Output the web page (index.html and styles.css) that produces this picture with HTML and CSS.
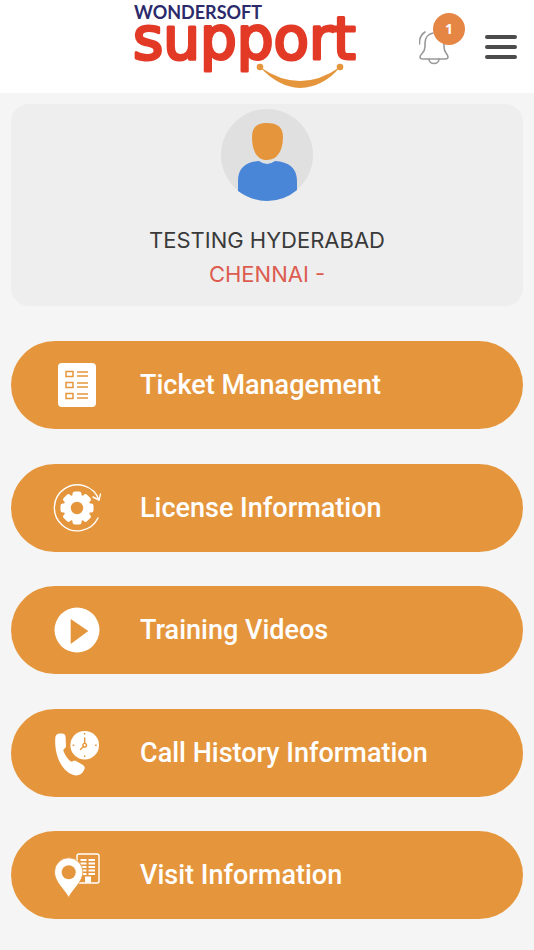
FILE: index.html
```html
<!DOCTYPE html>
<html lang="en">
<head>
	<meta charset="utf-8">
	<meta name="viewport" content="width=device-width, initial-scale=1">
	<title>Wondersoft Support</title>
	<link rel="stylesheet" href="styles.css">
</head>
<body>
	<header class="topbar">
		<a href="#" class="logo" aria-label="Wondersoft Support">
			<svg width="226" height="92" viewBox="0 0 226 92">
				<text class="logo-company" x="1" y="18">WONDERSOFT</text>
				<text class="logo-product" x="0" y="58">support</text>
				<g fill="#e5963c">
					<path d="M127 66 Q167 94 207 66 Q191 86 167 87 Q145 86 127 66z" />
					<circle cx="127" cy="66" r="3.3" />
					<circle cx="207" cy="66" r="3.3" />
				</g>
			</svg>
		</a>
		<button type="button" class="bell" aria-label="Notifications">
			<svg width="46" height="54" viewBox="0 0 46 54" fill="none" stroke="#999" stroke-width="1.6" stroke-linecap="round" stroke-linejoin="round">
				<path d="M14 20 C9 21 6 25 6 30 V34 C6 40 1 41 1 44 Q1 46 4 46 H26 Q29 46 29 44 C29 41 25 40 25 34 V28" />
				<path d="M10 46 C10 52 20 52 20 46" />
				<path d="M0.500 31 Q0 23 6 19" />
			</svg>
			<span class="badge">1</span>
		</button>
		<button type="button" class="menu-toggle" aria-label="Menu">
			<span></span>
			<span></span>
			<span></span>
		</button>
	</header>

	<main>
		<section class="profile">
			<svg class="avatar" width="92" height="92" viewBox="0 0 92 92">
				<circle cx="46" cy="46" r="46" fill="#e0e0e0" />
				<path d="M46 14 C56 14 62 18 62 28 C62 42 56 51 46 51 C36 51 31 42 31 28 C31 18 36 14 46 14z" fill="#e5963c" />
				<path d="M17 82 V72 C17 59 25 53 38 52 Q46 58 54 52 C68 53 76 59 76 72 V81 Q63 92 46 92 Q31 92 17 82z" fill="#4a86d8" />
			</svg>
			<h1>TESTING HYDERABAD</h1>
			<p>CHENNAI -</p>
		</section>

		<nav class="menu">
			<a href="#tickets">
				<svg width="48" height="48" viewBox="0 0 48 48">
					<rect x="5" y="2" width="38" height="44" rx="4" fill="#fff" />
					<g fill="none" stroke="#e5963c" stroke-width="1.5">
						<path d="M13 10.500h7v5h-7z M13 21.500h7v5h-7z M13 32.500h7v5h-7z" />
						<path d="M24 11h11 M24 15h11 M24 22h11 M24 26h11 M24 33h11 M24 37h11" />
					</g>
				</svg>
				Ticket Management
			</a>
			<a href="#license">
				<svg width="48" height="48" viewBox="0 0 48 48">
					<g fill="none" stroke="#fff" stroke-width="1.4" stroke-linecap="round" stroke-linejoin="round">
						<path d="M45 34 A23 23 0 1 1 46 16" />
						<path d="M40 13 L46 16 L47.500 10" />
					</g>
					<g fill="#fff">
						<circle cx="24" cy="24" r="13.500" />
						<rect x="19.500" y="7.500" width="9" height="33" rx="2.500" />
						<rect x="19.500" y="7.500" width="9" height="33" rx="2.500" transform="rotate(45 24 24)" />
						<rect x="19.500" y="7.500" width="9" height="33" rx="2.500" transform="rotate(90 24 24)" />
						<rect x="19.500" y="7.500" width="9" height="33" rx="2.500" transform="rotate(135 24 24)" />
					</g>
					<circle cx="24" cy="24" r="6.200" fill="#e5963c" />
				</svg>
				License Information
			</a>
			<a href="#training">
				<svg width="48" height="48" viewBox="0 0 48 48">
					<circle cx="24" cy="24" r="22.500" fill="#fff" />
					<path d="M17.700 13 V38 L35.300 25z" fill="#e5963c" />
				</svg>
				Training Videos
			</a>
			<a href="#calls">
				<svg width="48" height="48" viewBox="0 0 48 48">
					<path d="M6 4.500 H9 Q12.500 4.500 12.600 8 L13 17 Q13 19 11 20 Q10 21 10.500 22 Q13 29 18 32.500 Q19 33 20 32 Q21.500 31 23 32 L30 36 Q32.500 38 31.500 40 Q29 46.500 23 46.500 C11 45 1 29 2.300 9 Q2.500 5 6 4.500z" fill="#fff" />
					<circle cx="31.700" cy="16.200" r="14.300" fill="#fff" />
					<g fill="none" stroke="#e5963c" stroke-width="1.400" stroke-linecap="round">
						<circle cx="31.700" cy="16.200" r="1.800" />
						<path d="M31.700 14 V9 M30.300 17.700 L27.500 20.500" />
						<path d="M31.700 4.500v.6 M31.700 27v.6 M20.200 16.200h.6 M42.600 16.200h.6" />
					</g>
				</svg>
				Call History Information
			</a>
			<a href="#visits">
				<svg width="48" height="48" viewBox="0 0 48 48">
					<rect x="24" y="3" width="22" height="29" rx="2" fill="none" stroke="#fff" stroke-width="1.400" />
					<path d="M27.500 9h6 M35.500 9h6.500 M27.500 12.500h6 M35.500 12.500h6.500 M27.500 16h6 M35.500 16h6.500 M27.500 19.500h6 M35.500 19.500h6.500 M27.500 23h6 M35.500 23h6.500" stroke="#fff" stroke-width="1.800" />
					<path d="M32 25.500h6v6h-6z" fill="#fff" />
					<path d="M15.700 46.500 C12 39 1.500 31 1.500 21 A14.200 14.200 0 0 1 29.900 21 C29.900 31 19 39 15.700 46.500z" fill="#fff" stroke="#e5963c" stroke-width=".8" />
					<circle cx="15.700" cy="21.300" r="7" fill="#e5963c" />
				</svg>
				Visit Information
			</a>
		</nav>
	</main>
</body>
</html>
```

FILE: styles.css
```css
* {
	box-sizing: border-box;
}

body {
	display: flex;
	flex-direction: column;
	min-height: 100vh;
	margin: 0;
	background: #f5f5f5;
	color: #3a3a3a;
	font-family: Roboto, sans-serif;
}

button {
	padding: 0;
	border: 0;
	background: none;
	cursor: pointer;
}

svg {
	display: block;
	flex-shrink: 0;
}

.topbar {
	display: flex;
	align-items: center;
	justify-content: flex-end;
	height: 93px;
	padding: 0 17px;
	background: #fff;
}

.logo {
	margin-right: 60px;
}

.logo-company {
	fill: #2b2b6b;
	font: bold 18px Lato, sans-serif;
}

.logo-product {
	fill: #e23a26;
	stroke: #e23a26;
	stroke-width: 3px;
	stroke-linejoin: round;
	font: 58px "DejaVu Sans", sans-serif;
}

.bell {
	position: relative;
	margin-right: 20px;
	padding-bottom: 14px;
}

.badge {
	position: absolute;
	top: 0;
	right: 0;
	width: 32px;
	border-radius: 50%;
	background: #e68645;
	color: #fff;
	font: bold 14px/32px "Open Sans", sans-serif;
}

.menu-toggle {
	display: flex;
	flex-direction: column;
	gap: 6px;
	width: 32px;
}

.menu-toggle span {
	height: 4px;
	border-radius: 2px;
	background: #4c4c4c;
}

main {
	display: flex;
	flex: 1;
	flex-direction: column;
	gap: 35px;
	padding: 11px 11px 31px;
}

.profile {
	display: flex;
	flex-direction: column;
	align-items: center;
	padding: 5px 0 15px;
	border-radius: 18px;
	background: #eee;
	font-family: Inter, sans-serif;
}

.avatar {
	margin-bottom: 22px;
}

.profile h1,
.profile p {
	margin: 0;
	font-size: 22px;
	font-weight: 400;
	line-height: 34px;
}

.profile p {
	color: #dc5c50;
}

.menu {
	display: flex;
	flex: 1;
	flex-direction: column;
	justify-content: space-between;
	gap: 24px;
}

.menu a {
	display: flex;
	align-items: center;
	gap: 39px;
	height: 88px;
	padding: 0 42px;
	border-radius: 44px;
	background: #e5963c;
	color: #fff;
	font-size: 27px;
	font-weight: 500;
	text-decoration: none;
}
```
